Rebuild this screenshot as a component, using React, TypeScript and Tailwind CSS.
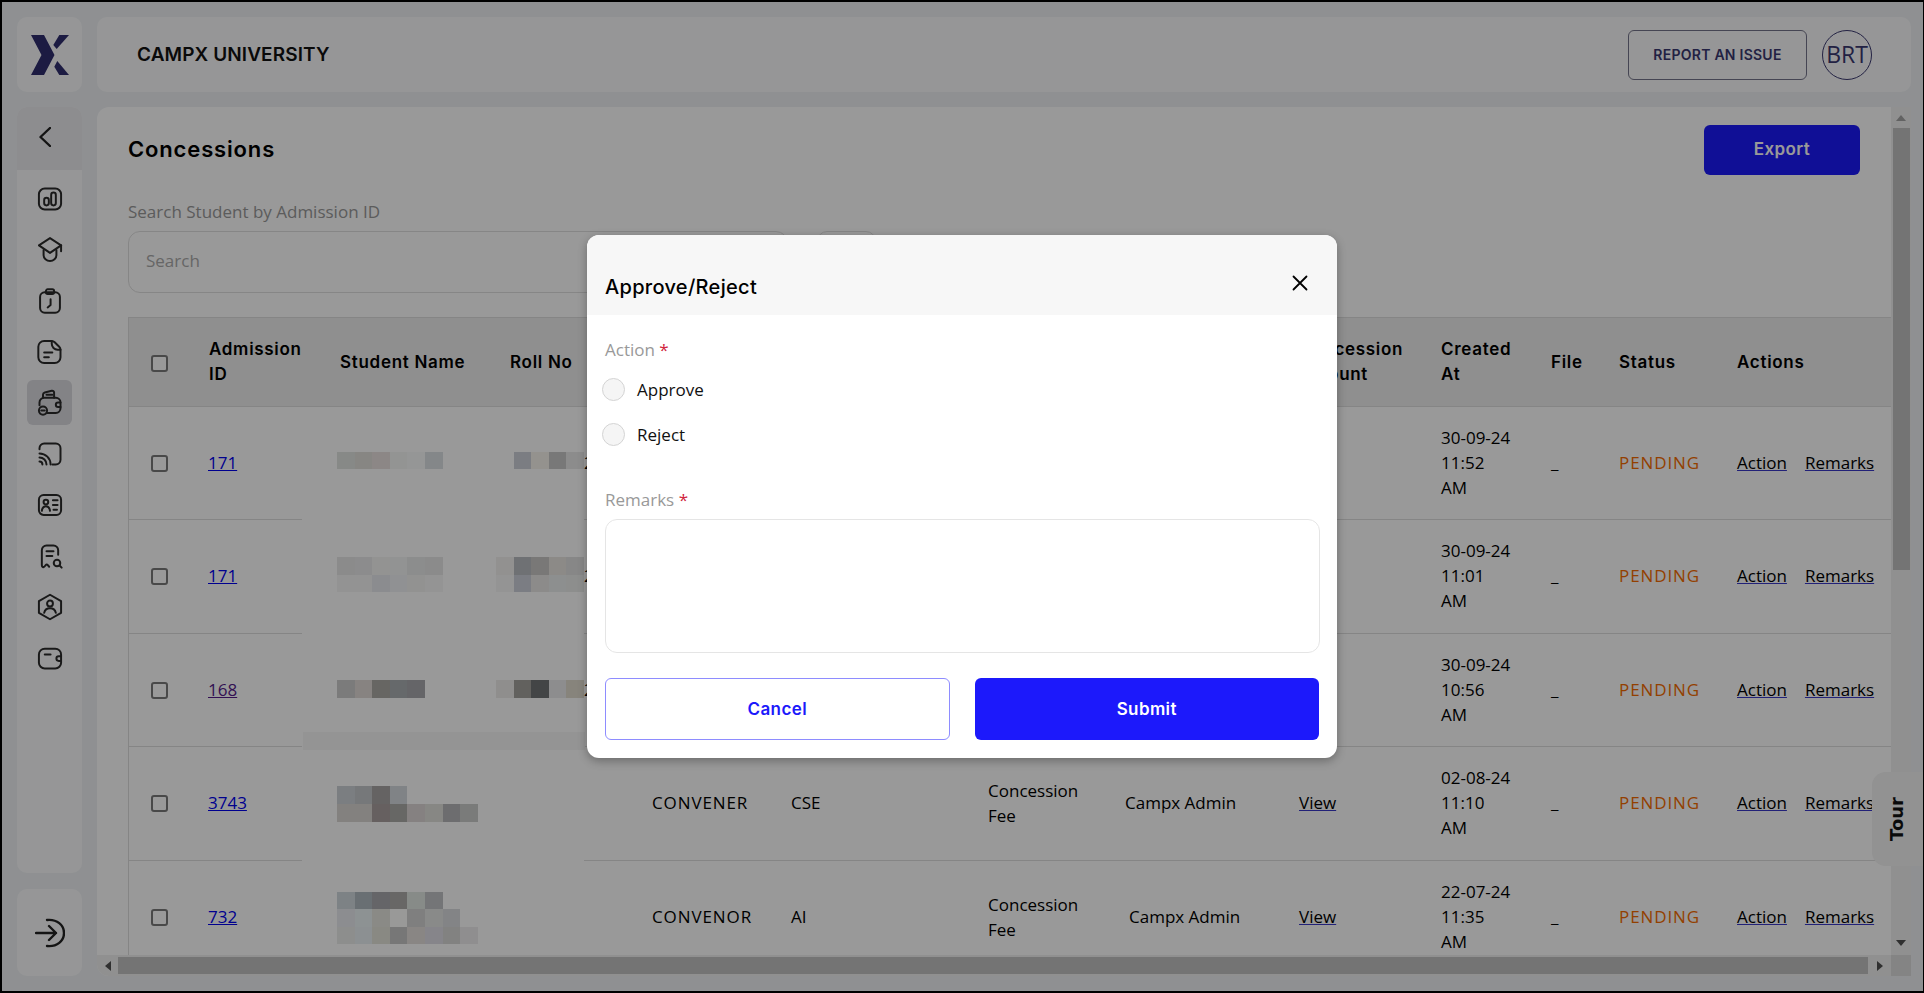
import { ReactNode } from "react";

const HEAD_FONT = "font-['Inter','Liberation_Sans',sans-serif]";
const BODY_FONT = "font-['Open_Sans','Liberation_Sans',sans-serif]";

type Row = {
  id: string;
  visited?: boolean;
  height: string;
  name: (string | null)[][];
  nameOffset: string;
  roll: (string | null)[][];
  rollOffset: string;
  quota: string;
  branch: string;
  createdByOffset: string;
  date: string;
  time: string;
};

// the pixelated (redacted) names, colours as they look under the dimmed modal backdrop
const rows: Row[] = [
  {
    id: "171",
    height: "h-[113px]",
    name: [["#8a8c8a", "#8c8a84", "#938887", "#959897", "#979a99", "#848b8e"]],
    nameOffset: "mb-[6px]",
    roll: [[null, "#7b7e89", "#9a958e", "#7a7a7b", "#8f8f8f"]],
    rollOffset: "mb-[6px]",
    quota: "CONVENER",
    branch: "CSE",
    createdByOffset: "",
    date: "30-09-24",
    time: "11:52",
  },
  {
    id: "171",
    height: "h-[114px]",
    name: [
      ["#8e8e8e", "#8e8f91", "#979795", "#949796", "#8f9190", "#8e8e8e"],
      ["#969696", "#969696", "#8d8e94", "#939497", "#959594", "#979797"],
    ],
    nameOffset: "mb-[5px]",
    roll: [
      ["#959493", "#6e747a", "#7d7b78", "#928d87", "#8a8a8a"],
      ["#979797", "#7a7f8a", "#908e8c", "#8e9393", "#8f9290"],
    ],
    rollOffset: "mb-[5px]",
    quota: "CONVENER",
    branch: "CSE",
    createdByOffset: "",
    date: "30-09-24",
    time: "11:01",
  },
  {
    id: "168",
    visited: true,
    height: "h-[113px]",
    name: [["#7f7d7d", "#8e8680", "#6b6864", "#666c70", "#67676b"]],
    nameOffset: "mb-[3px]",
    roll: [["#93918f", "#66645e", "#434749", "#8f9092", "#8e8879"]],
    rollOffset: "mb-[3px]",
    quota: "CONVENER",
    branch: "CSE",
    createdByOffset: "",
    date: "30-09-24",
    time: "10:56",
  },
  {
    id: "3743",
    height: "h-[114px]",
    name: [
      ["#7b8186", "#767c7e", "#696565", "#7f858d"],
      ["#88857f", "#88857f", "#6d6060", "#6a6a66", "#8b8282", "#8b8c85", "#6f6e74", "#7d7f7c"],
    ],
    nameOffset: "",
    roll: [],
    rollOffset: "",
    quota: "CONVENER",
    branch: "CSE",
    createdByOffset: "",
    date: "02-08-24",
    time: "11:10",
  },
  {
    id: "732",
    height: "h-[114px]",
    name: [
      ["#7c858c", "#67727a", "#67666c", "#6c6968", "#89908a", "#75777c"],
      ["#8e9095", "#8d9799", "#8f8e86", "#9d9d9b", "#828282", "#8b8e8c", "#84868b"],
      ["#8f9290", "#8b9597", "#8e8e82", "#7a7a7a", "#8f8985", "#878690", "#858583", "#929093"],
    ],
    nameOffset: "",
    roll: [],
    rollOffset: "",
    quota: "CONVENOR",
    branch: "AI",
    createdByOffset: "pl-[4px]",
    date: "22-07-24",
    time: "11:35",
  },
];

// backdrop is black/40, so undo it to get the colour underneath (and pull the tint back a bit)
function undim(hex: string) {
  const n = parseInt(hex.slice(1), 16);
  const rgb = [(n >> 16) & 255, (n >> 8) & 255, n & 255];
  const avg = (rgb[0] + rgb[1] + rgb[2]) / 3;
  const [r, g, b] = rgb.map((v) => Math.min(255, Math.round(((v + avg) / 2) * 0.98 / 0.6)));
  return `rgb(${r}, ${g}, ${b})`;
}

function Mosaic({ lines, className }: { lines: (string | null)[][]; className: string }) {
  return (
    <div className={`flex flex-col ${className}`}>
      {lines.map((line, i) => (
        <div key={i} className="flex h-[17.6px]">
          {line.map((color, j) => (
            <div
              key={j}
              className="h-full w-[17.6px] shrink-0"
              style={color ? { backgroundColor: undim(color) } : undefined}
            />
          ))}
        </div>
      ))}
    </div>
  );
}

function Icon({ children }: { children: ReactNode }) {
  return (
    <svg
      viewBox="0 0 24 24"
      className="h-[28px] w-[28px]"
      fill="none"
      stroke="#2b2b2b"
      strokeWidth="1.7"
      strokeLinecap="round"
      strokeLinejoin="round"
    >
      {children}
    </svg>
  );
}

const navIcons: ReactNode[] = [
  <>
    <rect x="2.5" y="3" width="19" height="18" rx="5" />
    <rect x="7" y="11" width="4" height="6.5" rx="2" />
    <rect x="13" y="6.5" width="4" height="11" rx="2" />
  </>,
  <>
    <path d="M12 1.8 21.5 8 12 14.5 2.5 8Z" />
    <path d="M6.5 12v4.5c0 2.5 2.5 5 5.5 5s5.5-2.5 5.5-5V12" />
    <path d="M21.5 8v5" />
  </>,
  <>
    <rect x="3.5" y="4.5" width="17" height="17.5" rx="4" />
    <rect x="8.5" y="2" width="7" height="4" rx="1.5" />
    <path d="M12.5 10.5v5l-2.5 2" />
  </>,
  <>
    <path d="M7 2.5h6.5c1 0 1.8.4 2.5 1.1l3.9 3.9c.7.7 1.1 1.5 1.1 2.5v6.5a5 5 0 0 1-5 5H7a5 5 0 0 1-5-5v-9a5 5 0 0 1 5-5z" />
    <path d="M13.5 2.5V5a5 5 0 0 0 5 5H21" />
    <path d="M7 12.5h7M7 16.5h4" />
  </>,
  <>
    <path d="M3 14v-2.5a4 4 0 0 1 4-4h10a4 4 0 0 1 4 4v5a4 4 0 0 1-4 4H9.5" />
    <path d="M6 7.5V5a2 2 0 0 1 1.5-2l6-1.5c1-.2 2 .5 2 1.5v4.5" />
    <path d="M9 5h5" />
    <path d="M21 11.5h-2a2 2 0 0 0 0 4h2" />
    <circle cx="6" cy="18.5" r="3.5" />
    <path d="M4.5 18.5h3" />
  </>,
  <>
    <path d="M3 8V7a4 4 0 0 1 4-4h10a4 4 0 0 1 4 4v10a4 4 0 0 1-4 4h-3" />
    <path d="M3 11.5a9.5 9.5 0 0 1 9.5 9.5M3 15a6 6 0 0 1 6 6M3 18.5a2.5 2.5 0 0 1 2.5 2.5" />
  </>,
  <>
    <rect x="2.5" y="3.5" width="19" height="17" rx="4" />
    <circle cx="8.5" cy="9.5" r="2" />
    <path d="M5 17c.3-2.5 1.8-4 3.5-4s3.2 1.5 3.5 4" />
    <path d="M14.5 8h4M14.5 12h4M15 16h3" />
  </>,
  <>
    <path d="M19 11V7a4 4 0 0 0-4-4H9a4 4 0 0 0-4 4v13c0 1.5 1.5 2 2.3 1l1-1.2c.5-.6 1.3-.6 1.8 0l1.2 1.4" />
    <path d="M9 8h6M9 12h5" />
    <circle cx="18" cy="18" r="2.8" />
    <path d="M20.2 20.2 22 22" />
  </>,
  <>
    <path d="M12 1.5 21.5 7v10L12 22.5 2.5 17V7Z" />
    <circle cx="12" cy="9" r="2.5" />
    <path d="M7 17c.5-2.5 2.5-4 5-4s4.5 1.5 5 4" />
  </>,
  <>
    <rect x="2.5" y="4" width="19" height="17" rx="5" />
    <path d="M7.5 9h5" />
    <path d="M21.5 10.5h-2a2 2 0 0 0 0 4h2" />
  </>,
];

function Logo() {
  return (
    <svg viewBox="0 0 38 40" className="h-[40px] w-[38px]" fill="#2f2d6e">
      <polygon points="0,0 13,0 23.5,20 13,40 0,40 10.5,20" />
      <polygon points="38,0 28.3,0 22.3,10 25.7,14" />
      <polygon points="38,40 28.3,40 23.3,31.7 26.3,26" />
    </svg>
  );
}

function Sidebar() {
  return (
    <aside className="flex w-[65px] shrink-0 flex-col">
      <div className="flex h-[75px] items-center justify-center rounded-[10px] bg-[#fbfbfc]">
        <Logo />
      </div>
      <div className="mt-[15px] flex-1 overflow-hidden rounded-[10px] bg-[#fbfbfc]">
        <div className="flex h-[63px] items-center bg-[#ebebee] pb-[3px] pl-[22px]">
          <svg viewBox="0 0 12 20" className="h-[20px] w-[12px]" fill="none" stroke="#222" strokeWidth="2.4" strokeLinecap="round" strokeLinejoin="round">
            <path d="M11 1 1.5 10 11 19" />
          </svg>
        </div>
        <nav className="mt-[6px] flex flex-col items-center">
          {navIcons.map((icon, i) => (
            <div
              key={i}
              className={`mb-[6px] flex h-[45px] w-[45px] items-center justify-center rounded-[6px] ${i === 4 ? "bg-[#dadae0]" : ""}`}
            >
              <Icon>{icon}</Icon>
            </div>
          ))}
        </nav>
      </div>
      <div className="mt-[16px] flex h-[87px] items-center justify-center rounded-[10px] bg-[#fbfbfc]">
        <svg viewBox="0 0 30 30" className="h-[30px] w-[30px]" fill="none" stroke="#222" strokeWidth="2.4" strokeLinecap="round" strokeLinejoin="round">
          <path d="M1 15h20M14 8l7 7-7 7" />
          <path d="M12 2c10-1 17 5 17 13s-7 14-17 13" />
        </svg>
      </div>
    </aside>
  );
}

function Header() {
  return (
    <header className="flex h-[75px] shrink-0 items-center justify-between rounded-[10px] bg-[#fbfbfc] pl-[40px] pr-[39px]">
      <h1 className={`${HEAD_FONT} pt-[2px] text-[19px] font-semibold tracking-[0.1px] text-[#111]`}>CAMPX UNIVERSITY</h1>
      <div className="flex items-center gap-[15px]">
        <button className={`${HEAD_FONT} h-[50px] w-[179px] rounded-[6px] border border-[#74748a] text-[14px] font-semibold tracking-[0.25px] text-[#3a3870]`}>
          REPORT AN ISSUE
        </button>
        <div className={`${BODY_FONT} flex h-[50px] w-[50px] items-center justify-center rounded-full border border-[#3a3870] text-[23px] text-[#3a3870]`}>
          BRT
        </div>
      </div>
    </header>
  );
}

const thClass = `${HEAD_FONT} border-y border-[#dedede] bg-[#eeeeee] text-left text-[17px] font-semibold leading-[25px] tracking-[0.7px] text-black align-middle`;
const tdClass = "border-b border-[#dedede] pb-[2px] align-middle text-[17px] leading-[25px]";

function Checkbox() {
  return (
    <input
      type="checkbox"
      className="mt-[2px] block h-[17px] w-[17px] appearance-none rounded-[3px] border-2 border-[#7a7a7a] bg-white"
    />
  );
}

function ConcessionsTable() {
  return (
    <div className="relative border-l border-[#dedede]">
      <table className={`${BODY_FONT} w-[1763px] table-fixed border-separate border-spacing-0 text-black`}>
        <colgroup>
          <col className="w-[79px]" />
          <col className="w-[94px]" />
          <col className="w-[194px]" />
          <col className="w-[88px]" />
          <col className="w-[68px]" />
          <col className="w-[139px]" />
          <col className="w-[197px]" />
          <col className="w-[137px]" />
          <col className="w-[174px]" />
          <col className="w-[142px]" />
          <col className="w-[110px]" />
          <col className="w-[68px]" />
          <col className="w-[118px]" />
          <col className="w-[155px]" />
        </colgroup>
        <thead>
          <tr className="h-[90px]">
            <th className={`${thClass} pl-[22px]`}>
              <Checkbox />
            </th>
            <th className={`${thClass} pl-[1px]`}>Admission ID</th>
            <th className={`${thClass} pl-[38px]`}>Student Name</th>
            <th colSpan={2} className={`${thClass} pl-[14px]`}>Roll No</th>
            <th className={thClass}>Quota</th>
            <th className={thClass}>Branch</th>
            <th className={thClass}>Fee Type</th>
            <th className={thClass}>Created By</th>
            <th className={thClass}>Concession Amount</th>
            <th className={`${thClass} pr-[30px]`}>Created At</th>
            <th className={thClass}>File</th>
            <th className={thClass}>Status</th>
            <th className={thClass}>Actions</th>
          </tr>
        </thead>
        <tbody>
          {rows.map((row, i) => (
            <tr key={i} className={row.height}>
              <td className={`${tdClass} pl-[22px]`}>
                <Checkbox />
              </td>
              <td className={tdClass}>
                <a href="#" className={`underline ${row.visited ? "text-[#551a8b]" : "text-[#0000ee]"}`}>
                  {row.id}
                </a>
              </td>
              <td className="pl-[35px] align-middle">
                <Mosaic lines={row.name} className={row.nameOffset} />
              </td>
              <td className="align-middle">
                <Mosaic lines={row.roll} className={row.rollOffset} />
              </td>
              <td className={tdClass}>{row.roll.length ? "22" : ""}</td>
              <td className={`${tdClass} tracking-[0.9px]`}>{row.quota}</td>
              <td className={tdClass}>{row.branch}</td>
              <td className={tdClass}>
                Concession
                <br />
                Fee
              </td>
              <td className={`${tdClass} ${row.createdByOffset}`}>Campx Admin</td>
              <td className={tdClass}>
                <a href="#" className="underline decoration-[#3a37c8]">View</a>
              </td>
              <td className={tdClass}>
                {row.date}
                <br />
                {row.time}
                <br />
                AM
              </td>
              <td className={tdClass}>_</td>
              <td className={`${tdClass} tracking-[0.9px] text-[#f56c00]`}>PENDING</td>
              <td className={`${tdClass} whitespace-nowrap`}>
                <a href="#" className="underline decoration-[#3a37c8]">Action</a>
                <a href="#" className="ml-[18px] underline decoration-[#3a37c8]">Remarks</a>
              </td>
            </tr>
          ))}
        </tbody>
      </table>
      {/* leftover of the redaction box, sits across the row line */}
      <div className="absolute left-[174px] top-[415px] h-[18px] w-[282px] bg-[#f7f7f7]" />
    </div>
  );
}

function Triangle({ dir }: { dir: "up" | "down" | "left" | "right" }) {
  const points = {
    up: "0,7 5,1 10,7",
    down: "0,1 10,1 5,7",
    left: "7,0 7,10 1,5",
    right: "1,0 1,10 7,5",
  }[dir];
  const size = dir === "up" || dir === "down" ? "h-[8px] w-[10px]" : "h-[10px] w-[8px]";
  const box = dir === "up" || dir === "down" ? "0 0 10 8" : "0 0 8 10";
  return (
    <svg viewBox={box} className={size} fill={dir === "up" ? "#a3a3a3" : "#505050"}>
      <polygon points={points} />
    </svg>
  );
}

function Main() {
  return (
    <main className="mt-[15px] flex min-h-0 flex-1 flex-col overflow-hidden rounded-l-[12px] bg-white">
      <div className="flex min-h-0 flex-1">
        <div className="min-w-0 flex-1 overflow-hidden pl-[31px] pt-[18px]">
          <div className="flex h-[50px] items-center justify-between pr-[31px]">
            <h2 className={`${HEAD_FONT} pb-[2px] text-[22px] font-semibold tracking-[0.85px] text-black`}>Concessions</h2>
            <button className={`${HEAD_FONT} h-[50px] w-[156px] rounded-[6px] bg-[#1c19fb] text-[17px] font-semibold tracking-[0.4px] text-white`}>
              Export
            </button>
          </div>
          <label className={`${BODY_FONT} mt-[25px] block text-[17px] leading-[24px] text-[#999]`}>
            Search Student by Admission ID
          </label>
          <div className="mt-[7px] flex items-start">
            <input
              placeholder="Search"
              className={`${BODY_FONT} h-[62px] w-[660px] rounded-[12px] border border-[#e0e0e0] px-[17px] pb-[3px] text-[17px] placeholder:text-[#aaa]`}
            />
            <button className="ml-[29px] h-[62px] w-[59px] rounded-[10px] border border-[#e0e0e0]" />
          </div>
          <div className="mt-[24px]">
            <ConcessionsTable />
          </div>
        </div>
        <div className="flex w-[20px] shrink-0 flex-col items-center bg-[#f1f1f1]">
          <div className="flex h-[21px] items-center justify-center"><Triangle dir="up" /></div>
          <div className="h-[442px] w-[17px] bg-[#c1c1c1]" />
          <div className="flex-1" />
          <div className="flex h-[24px] items-center justify-center"><Triangle dir="down" /></div>
        </div>
      </div>
      <div className="flex h-[21px] shrink-0 items-center bg-[#f1f1f1]">
        <div className="flex h-full w-[21px] items-center justify-center"><Triangle dir="left" /></div>
        <div className="h-[17px] w-[1750px] bg-[#c1c1c1]" />
        <div className="flex h-full flex-1 items-center justify-center"><Triangle dir="right" /></div>
        <div className="h-full w-[20px] bg-[#dcdcdc]" />
      </div>
    </main>
  );
}

function Radio({ label }: { label: string }) {
  return (
    <label className="ml-[-3px] flex h-[23px] items-center gap-[12px] text-[17px] text-[#111]">
      <span className="h-[23px] w-[23px] rounded-full border border-[#d4d4d4] bg-[#f5f5f5]" />
      {label}
    </label>
  );
}

function ActionModal() {
  return (
    <div className={`${BODY_FONT} h-[523px] w-[750px] overflow-hidden rounded-[12px] bg-white shadow-[0_3px_10px_rgba(0,0,0,0.3)]`}>
      <div className="relative h-[80px] bg-[#f7f7f7]">
        <h3 className={`${HEAD_FONT} absolute left-[18px] top-[38px] text-[20px] font-medium leading-[28px] tracking-[0.3px] text-black`}>
          Approve/Reject
        </h3>
        <svg viewBox="0 0 16 16" className="absolute left-[705px] top-[40px] h-[16px] w-[16px]" fill="none" stroke="#000" strokeWidth="1.8" strokeLinecap="round">
          <path d="M1.5 1.5l13 13M14.5 1.5l-13 13" />
        </svg>
      </div>
      <div className="px-[18px] pt-[23px]">
        <div className="text-[17px] leading-[24px] text-[#999]">
          Action <span className="text-[#d0243c]">*</span>
        </div>
        <div className="mt-[16px] flex flex-col gap-[22px]">
          <Radio label="Approve" />
          <Radio label="Reject" />
        </div>
        <div className="mt-[42px] text-[17px] leading-[24px] text-[#999]">
          Remarks <span className="text-[#d0243c]">*</span>
        </div>
        <textarea className="mt-[7px] block h-[134px] w-[715px] resize-none rounded-[12px] border border-[#e5e5e5]" />
        <div className="mt-[25px] flex gap-[25px]">
          <button className={`${HEAD_FONT} h-[62px] w-[345px] rounded-[6px] border border-[#8e8cff] pt-[2px] text-[17px] font-semibold tracking-[0.4px] text-[#1c19fb]`}>
            Cancel
          </button>
          <button className={`${HEAD_FONT} h-[62px] w-[345px] rounded-[6px] bg-[#1c19fb] pt-[2px] text-[17px] font-semibold tracking-[0.4px] text-white`}>
            Submit
          </button>
        </div>
      </div>
    </div>
  );
}

export default function App() {
  return (
    <div className="relative h-[993px] w-[1924px] overflow-hidden">
      <div className="flex h-full gap-[15px] bg-[#eef1f4] pb-[17px] pl-[17px] pr-[13px] pt-[17px]">
        <Sidebar />
        <div className="flex min-w-0 flex-1 flex-col">
          <Header />
          <Main />
        </div>
      </div>
      <div className="absolute right-0 top-[772px] flex h-[94px] w-[52px] items-center justify-center rounded-l-[14px] bg-[#f3f3f3] pr-[3px]">
        <span className="rotate-180 font-['DejaVu_Sans',sans-serif] text-[18px] font-bold text-[#111] [writing-mode:vertical-rl]">
          Tour
        </span>
      </div>
      <div className="absolute inset-0 flex items-center justify-center bg-black/40">
        <ActionModal />
      </div>
      {/* screenshot frame */}
      <div className="pointer-events-none absolute inset-0 border-2 border-r border-black" />
    </div>
  );
}
